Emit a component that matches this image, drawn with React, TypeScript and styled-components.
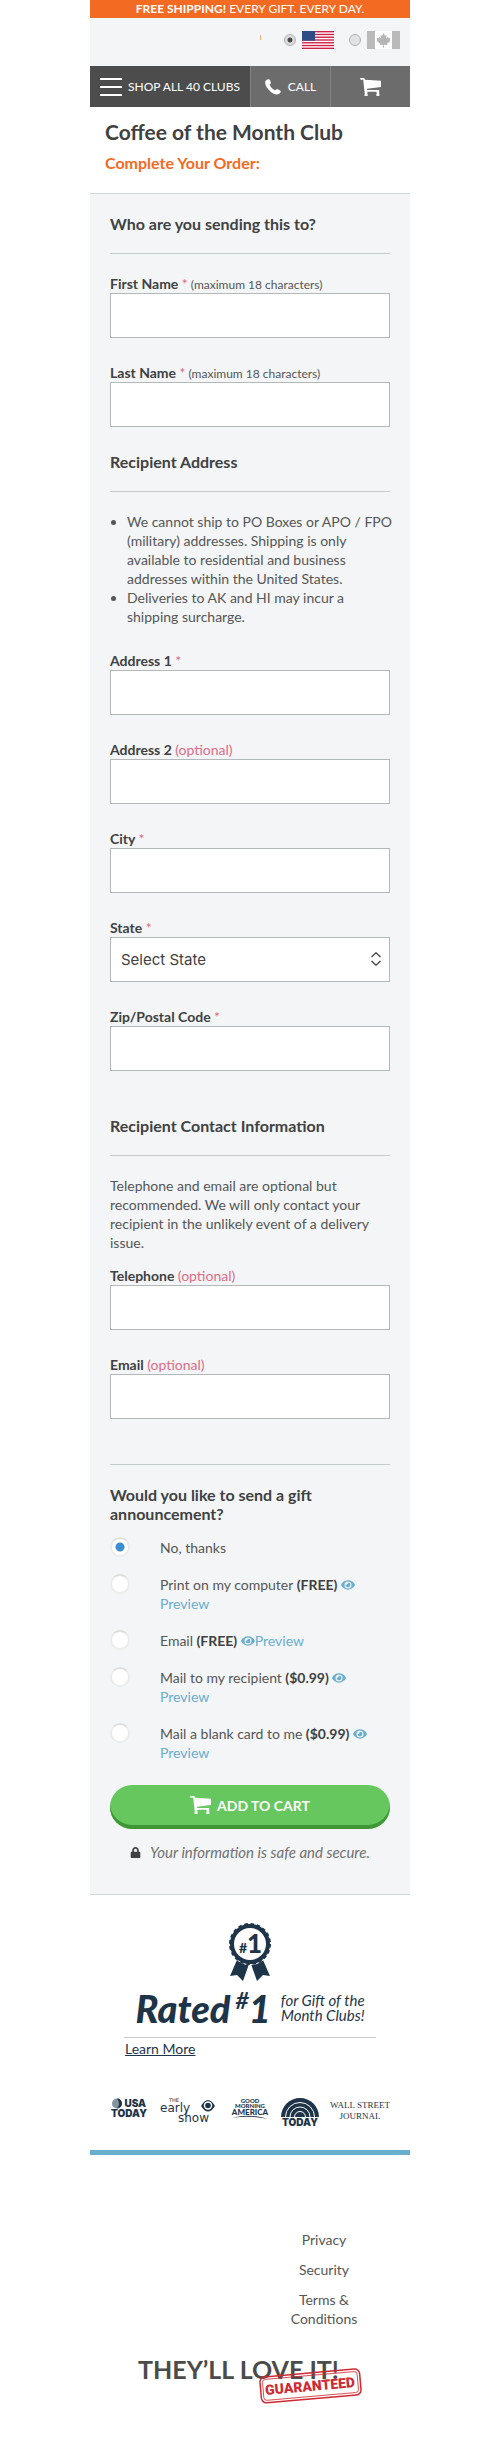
import React, { useState } from "react";
import styled, { createGlobalStyle } from "styled-components";
import { FaEye, FaLock } from "react-icons/fa";

const color = {
  orange: "#f36a23",
  panel: "#f3f5f6",
  rule: "#c3cccb",
  field: "#b3b9b8",
  ink: "#404142",
  text: "#555657",
  pink: "#df6c88",
  blue: "#69adcf",
  navy: "#1e3448",
};

const GlobalStyle = createGlobalStyle`
  *, *::before, *::after { box-sizing: border-box; }
  body { margin: 0; background: #fff; }
  h1, h2, h3, p, ul { margin: 0; padding: 0; }
`;

const Page = styled.div`
  max-width: 320px;
  margin: 0 auto;
  font-family: Lato, "Open Sans", sans-serif;
  font-size: 14px;
  line-height: 19px;
  color: ${color.text};
`;

const Banner = styled.div`
  background: ${color.orange};
  color: #fff;
  font-size: 12px;
  line-height: 18px;
  text-align: center;
`;

const CountryBar = styled.div`
  display: flex;
  justify-content: flex-end;
  align-items: center;
  gap: 15px;
  padding: 13px 10px 17px;
  background: ${color.panel};
`;

const Tick = styled.span`
  width: 1px;
  height: 5px;
  margin: 0 8px 5px 0;
  background: #f4b183;
`;

const CountryOption = styled.label`
  display: flex;
  align-items: center;
  gap: 6px;
  svg { display: block; }
`;

const SmallRadio = styled.input`
  appearance: none;
  width: 12px;
  height: 12px;
  margin: 0;
  border: 1px solid #b2b2b2;
  border-radius: 50%;
  background: #e2e2e2;
  &:checked { background: radial-gradient(circle, #4a4a4a 0 2px, #dedede 3px); }
`;

const Nav = styled.nav`
  display: grid;
  grid-template-columns: 2fr 1fr 1fr;
  height: 41px;
`;

const navItem = `
  display: flex;
  align-items: center;
  justify-content: center;
  border: 0;
  padding: 0;
  color: #fff;
  font: inherit;
  font-size: 12px;
  text-decoration: none;
`;

const MenuButton = styled.button`
  ${navItem}
  justify-content: flex-start;
  gap: 6px;
  padding-left: 10px;
  background: #4c4c4c;
`;

const NavLink = styled.a`
  ${navItem}
  gap: 7px;
  border-left: 1px solid #858585;
  background: #6c6c6c;
`;

const TitleBlock = styled.header`
  padding: 12px 15px 21px;
`;

const Title = styled.h1`
  color: ${color.ink};
  font-size: 21px;
  line-height: 26px;
`;

const Subtitle = styled.h2`
  margin-top: 8px;
  color: ${color.orange};
  font-size: 16px;
  line-height: 19px;
`;

const Form = styled.form`
  padding: 20px 20px 32px;
  border: solid #ccd8d9;
  border-width: 1px 0;
  background: ${color.panel};
`;

const Heading = styled.h3<{ $gap?: number }>`
  margin-top: ${(p) => p.$gap ?? 0}px;
  color: ${color.ink};
  font-size: 16px;
  line-height: 19px;
`;

const Rule = styled.hr<{ $top?: number }>`
  height: 1px;
  margin: ${(p) => p.$top ?? 20}px 0 20px;
  border: 0;
  background: ${color.rule};
`;

const Fields = styled.div<{ $gap?: number }>`
  display: grid;
  gap: 25px;
  margin-top: ${(p) => p.$gap ?? 0}px;
`;

const FieldBox = styled.div`
  display: flex;
  flex-direction: column;
`;

const FieldLabel = styled.label`
  color: ${color.ink};
  font-weight: 700;
  span, small { font-weight: 400; }
  span { color: ${color.pink}; }
  small { color: ${color.text}; font-size: 12px; line-height: 12px; }
`;

const control = `
  width: 100%;
  height: 45px;
  margin: 0;
  padding: 0 10px;
  border: 1px solid ${color.field};
  border-radius: 0;
  background: #fff;
  color: ${color.ink};
  font-family: Inter, sans-serif;
  font-size: 15px;
`;

const TextInput = styled.input`${control}`;

const Select = styled.select`
  ${control}
  display: block;
  appearance: none;
`;

const SelectWrap = styled.div`
  position: relative;
  svg {
    position: absolute;
    top: 15px;
    right: 9px;
    pointer-events: none;
  }
`;

const Notes = styled.ul`
  margin-right: -6px;
  padding-left: 17px;
`;

const Options = styled.div`
  display: grid;
  gap: 18px;
  margin-top: 15px;
`;

const Option = styled.div`
  display: grid;
  grid-template-columns: 20px 1fr;
  column-gap: 30px;
`;

const OptionText = styled.div`
  label { color: ${color.text}; }
  b { color: ${color.ink}; }
`;

const Radio = styled.input`
  appearance: none;
  width: 20px;
  height: 20px;
  margin: -1px 0;
  border: 2px solid #ebebea;
  border-top-color: #dfdfde;
  border-radius: 50%;
  background: #fff;
  &:checked { background: radial-gradient(circle, #3b8fce 0 4px, #fff 5px); }
`;

const PreviewLink = styled.a`
  color: ${color.blue};
  text-decoration: none;
  svg { vertical-align: -2px; }
`;

const CartButton = styled.button`
  display: flex;
  align-items: center;
  justify-content: center;
  gap: 6px;
  width: 100%;
  height: 44px;
  margin-top: 23px;
  padding: 0 0 4px;
  border: 0;
  border-radius: 22px;
  background: #67c75f;
  box-shadow: inset 0 -4px #3f9634;
  color: #fff;
  font: inherit;
  font-weight: 700;
`;

const Secure = styled.p`
  display: flex;
  align-items: center;
  justify-content: center;
  gap: 9px;
  margin-top: 14px;
  color: #707172;
  font-size: 15px;
  font-style: italic;
  svg { color: ${color.ink}; }
`;

const Rating = styled.section`
  display: flex;
  flex-direction: column;
  margin: 0 34px;
  padding-top: 28px;
  color: ${color.navy};
`;

const Ribbon = styled.svg`
  align-self: center;
  display: block;
`;

const RatedRow = styled.div`
  display: flex;
  align-items: center;
  justify-content: center;
  gap: 10px;
  height: 42px;
  margin-top: 6px;
  font-style: italic;
  white-space: nowrap;
`;

const Rated = styled.strong`
  display: flex;
  font-size: 38px;
  line-height: 42px;
  font-weight: 900;
`;

const Hash = styled.span`
  margin-left: 5px;
  font-size: 23px;
  line-height: 26px;
  font-weight: 700;
`;

const RatedText = styled.span`
  font-size: 15px;
  line-height: 15px;
  text-align: center;
`;

const LearnMore = styled.a`
  margin-top: 8px;
  padding: 1px;
  border-top: 1px solid #c8c8c8;
  color: ${color.navy};
`;

const Press = styled.section`
  display: flex;
  justify-content: space-between;
  align-items: flex-start;
  padding: 39px 20px 22px;
  border-bottom: 5px solid ${color.blue};
`;

const Footer = styled.footer`
  padding: 75px 48px 32px;
`;

const FooterLinks = styled.nav`
  display: grid;
  justify-items: center;
  gap: 11px;
  width: 76px;
  margin-left: auto;
  text-align: center;
  a { color: ${color.text}; text-decoration: none; }
`;

const Promise = styled.div`
  position: relative;
  margin-top: 27px;
  color: #4b4b4b;
  font-size: 25px;
  line-height: 28px;
  font-weight: 700;
  white-space: nowrap;
`;

const Stamp = styled.svg`
  position: absolute;
  top: 13px;
  right: 0;
`;

const CartIcon = () => (
  <svg width="21" height="18" viewBox="0 0 21 18" fill="currentColor" aria-hidden="true">
    <path d="M0 0h4.2l1 1.8 15.8.9v6.4L7 10.7l.2 1.3h12v4a1.6 1.6 0 1 1-2.6 0v-2.3H7.4V16a1.6 1.6 0 1 1-2.6 0L3.2 1.7H.6z" />
  </svg>
);

const PhoneIcon = () => (
  <svg width="16" height="16" viewBox="0 0 16 16" fill="currentColor" aria-hidden="true">
    <path d="M3 .3C4.2 0 5 .9 5.6 2.4c.6 1.6.3 2.3-1 3.2.8 2.4 3 4.8 5.4 5.8.8-1.2 1.6-1.5 3.2-.9 1.8.7 2.8 1.4 2.5 2.5-.7 2-2.9 3-5.1 2.3C5.5 13.6 1.3 9 .2 4.4-.2 2.3 1 .8 3 .3z" />
  </svg>
);

const UsFlag = () => (
  <svg width="32" height="18" viewBox="0 0 32 18" role="img" aria-label="United States">
    <rect width="32" height="18" fill="#fff" />
    {[0, 1, 2, 3, 4, 5, 6].map((i) => (
      <rect key={i} y={i * 2.77} width="32" height="1.38" fill="#cf2148" />
    ))}
    <rect width="13" height="9.7" fill="#314b87" />
  </svg>
);

const CanadaFlag = () => (
  <svg width="33" height="18" viewBox="0 0 33 18" role="img" aria-label="Canada">
    <rect width="33" height="18" fill="#fff" />
    <path d="M0 0h8v18H0zM25 0h8v18h-8z" fill="#bababa" />
    <path
      d="M16.5 2l1.5 2.7 1.6-.7-.6 3.6 1.9-1.8.5 1.2 2.2-.3-1 2.5 1 .6-3.6 3 .4 1.3-3.5-.4.1 3h-.9l.1-3-3.5.4.4-1.3-3.7-3 1-.6-1-2.5 2.3.3.5-1.2 1.9 1.8-.6-3.6 1.6.7z"
      fill="#b5b5b5"
    />
  </svg>
);

type FieldProps = { id: string; label: string; note?: string; optional?: boolean; children?: React.ReactNode };

const Field = ({ id, label, note, optional, children }: FieldProps) => (
  <FieldBox>
    <FieldLabel htmlFor={id}>
      {label} <span>{optional ? "(optional)" : "*"}</span>
      {note && <small> {note}</small>}
    </FieldLabel>
    {children ?? <TextInput id={id} type="text" />}
  </FieldBox>
);

const announcements = [
  { id: "none", text: "No, thanks", price: "" },
  { id: "print", text: "Print on my computer", price: "(FREE)" },
  { id: "email", text: "Email", price: "(FREE)" },
  { id: "mail", text: "Mail to my recipient", price: "($0.99)" },
  { id: "blank", text: "Mail a blank card to me", price: "($0.99)" },
];

const RibbonIcon = () => (
  <Ribbon width="42" height="58" viewBox="0 0 42 58" role="img" aria-label="Number one award">
    <path d="M8 37L1 53l7-1 6 6 6-17zM34 37l7 16-7-1-6 6-6-17z" fill={color.navy} />
    <circle cx="21" cy="21" r="21" fill="#fff" />
    <circle cx="21" cy="21" r="18" fill="none" stroke={color.navy} strokeWidth="4" />
    <circle cx="21" cy="21" r="20" fill="none" stroke={color.navy} strokeWidth="2" strokeDasharray="3.6 2.68" />
    <text x="10" y="30" fontSize="14" fontWeight="900" fill={color.navy}>#</text>
    <text x="18" y="30" fontSize="26" fontWeight="900" fill={color.navy}>1</text>
  </Ribbon>
);

const PressLogos = () => (
  <Press aria-label="As seen in">
    <svg width="38" height="21" viewBox="0 0 38 21" fill={color.navy}>
      <circle cx="7" cy="5.5" r="5" fill="#8493a0" />
      <path d="M7 .5a5 5 0 0 1 0 10 8 8 0 0 0 0-10z" />
      <g fontFamily="Inter" fontWeight="900">
        <text x="36" y="9" fontSize="10" textAnchor="end">USA</text>
        <text x="19" y="19" fontSize="10" textAnchor="middle">TODAY</text>
      </g>
    </svg>
    <svg width="60" height="27" viewBox="0 0 60 27" fill={color.navy} fontFamily="DejaVu Sans">
      <text x="9" y="4" fontSize="5">THE</text>
      <text x="0" y="14" fontSize="12">early</text>
      <text x="18" y="24" fontSize="12">show</text>
      <path d="M41 8q7-12 14 0-7 11-14 0z" />
      <circle cx="48" cy="7.500" r="4.200" fill="#fff" />
      <circle cx="48" cy="7.500" r="2.800" />
    </svg>
    <svg width="38" height="22" viewBox="0 0 38 22" fill={color.navy} fontFamily="Lato" fontWeight="900" textAnchor="middle">
      <text x="19" y="5" fontSize="6">GOOD</text>
      <text x="19" y="10" fontSize="6">MORNING</text>
      <text x="19" y="17" fontSize="8">AMERICA</text>
      <path d="M1 20q18-5 36 1-18-4-36-1z" />
    </svg>
    <svg width="38" height="30" viewBox="0 0 38 30" fill={color.navy}>
      <path d="M0 19a19 19 0 0 1 38 0z" />
      <g fill="none" stroke="#fff">
        <path d="M4.500 19a14.500 14.500 0 0 1 29 0M9 19a10 10 0 0 1 20 0M13.500 19a5.500 5.500 0 0 1 11 0" />
      </g>
      <text x="19" y="28" fontFamily="Inter" fontWeight="900" fontSize="10" textAnchor="middle">TODAY</text>
    </svg>
    <svg width="60" height="24" viewBox="0 0 60 24" fill={color.navy} fontFamily="Liberation Serif" textAnchor="middle">
      <text x="30" y="10" fontSize="9">WALL STREET</text>
      <text x="30" y="21" fontSize="9">JOURNAL</text>
    </svg>
  </Press>
);

export default function App() {
  const [country, setCountry] = useState("us");
  const [choice, setChoice] = useState("none");

  return (
    <>
      <GlobalStyle />
      <Page>
        <Banner><b>FREE SHIPPING!</b> EVERY GIFT. EVERY DAY.</Banner>
        <CountryBar>
          <Tick />
          <CountryOption>
            <SmallRadio type="radio" name="country" aria-label="United States" checked={country === "us"} onChange={() => setCountry("us")} />
            <UsFlag />
          </CountryOption>
          <CountryOption>
            <SmallRadio type="radio" name="country" aria-label="Canada" checked={country === "ca"} onChange={() => setCountry("ca")} />
            <CanadaFlag />
          </CountryOption>
        </CountryBar>
        <Nav>
          <MenuButton type="button">
            <svg width="22" height="18" viewBox="0 0 22 18" fill="#fff" aria-hidden="true">
              <path d="M0 0h22v2H0zM0 8h22v2H0zM0 16h22v2H0z" />
            </svg>
            SHOP ALL 40 CLUBS
          </MenuButton>
          <NavLink href="#call"><PhoneIcon />CALL</NavLink>
          <NavLink href="#cart" aria-label="Cart"><CartIcon /></NavLink>
        </Nav>
        <TitleBlock>
          <Title>Coffee of the Month Club</Title>
          <Subtitle>Complete Your Order:</Subtitle>
        </TitleBlock>

        <Form onSubmit={(e) => e.preventDefault()}>
          <Heading>Who are you sending this to?</Heading>
          <Rule />
          <Fields>
            <Field id="first" label="First Name" note="(maximum 18 characters)" />
            <Field id="last" label="Last Name" note="(maximum 18 characters)" />
          </Fields>

          <Heading $gap={25}>Recipient Address</Heading>
          <Rule />
          <Notes>
            <li>We cannot ship to PO Boxes or APO / FPO (military) addresses. Shipping is only available to residential and business addresses within the United States.</li>
            <li>Deliveries to AK and HI may incur a shipping surcharge.</li>
          </Notes>
          <Fields $gap={25}>
            <Field id="address1" label="Address 1" />
            <Field id="address2" label="Address 2" optional />
            <Field id="city" label="City" />
            <Field id="state" label="State">
              <SelectWrap>
                <Select id="state"><option>Select State</option></Select>
                <svg width="10" height="14" viewBox="0 0 10 14" fill="none" stroke={color.ink} strokeWidth="1.300" aria-hidden="true">
                  <path d="M.5 5L5 .8 9.500 5M.5 9L5 13.200 9.500 9" />
                </svg>
              </SelectWrap>
            </Field>
            <Field id="zip" label="Zip/Postal Code" />
          </Fields>

          <Heading $gap={45}>Recipient Contact Information</Heading>
          <Rule />
          <p>Telephone and email are optional but recommended. We will only contact your recipient in the unlikely event of a delivery issue.</p>
          <Fields $gap={14}>
            <Field id="telephone" label="Telephone" optional />
            <Field id="email" label="Email" optional />
          </Fields>

          <Rule $top={45} />
          <Heading>Would you like to send a gift announcement?</Heading>
          <Options>
            {announcements.map((a) => (
              <Option key={a.id}>
                <Radio type="radio" name="announcement" id={`gift-${a.id}`} checked={choice === a.id} onChange={() => setChoice(a.id)} />
                <OptionText>
                  <label htmlFor={`gift-${a.id}`}>{a.text}{a.price && <b> {a.price}</b>}</label>{" "}
                  {a.price && <PreviewLink href="#preview"><FaEye size={14} />Preview</PreviewLink>}
                </OptionText>
              </Option>
            ))}
          </Options>
          <CartButton type="submit"><CartIcon />ADD TO CART</CartButton>
          <Secure><FaLock size={11} />Your information is safe and secure.</Secure>
        </Form>

        <Rating>
          <RibbonIcon />
          <RatedRow>
            <Rated>Rated<Hash>#</Hash>1</Rated>
            <RatedText>for Gift of the<br />Month Clubs!</RatedText>
          </RatedRow>
          <LearnMore href="#learn">Learn More</LearnMore>
        </Rating>
        <PressLogos />
        <Footer>
          <FooterLinks>
            <a href="#privacy">Privacy</a>
            <a href="#security">Security</a>
            <a href="#terms">Terms &amp; Conditions</a>
          </FooterLinks>
          <Promise>
            THEY’LL LOVE IT!
            <Stamp width="103" height="36" viewBox="0 0 103 36">
              <g transform="rotate(-5 51 18)" fill="none" stroke="#cf2a31">
                <rect x="1.500" y="5" width="100" height="26" rx="5" strokeWidth="1.500" />
                <rect x="4" y="7.500" width="95" height="21" rx="3" strokeWidth=".8" />
                <text x="51" y="23" fontFamily="Roboto" fontSize="14" fontWeight="900" fill="#cf2a31" stroke="none" textAnchor="middle">GUARANTEED</text>
              </g>
            </Stamp>
          </Promise>
        </Footer>
      </Page>
    </>
  );
}
